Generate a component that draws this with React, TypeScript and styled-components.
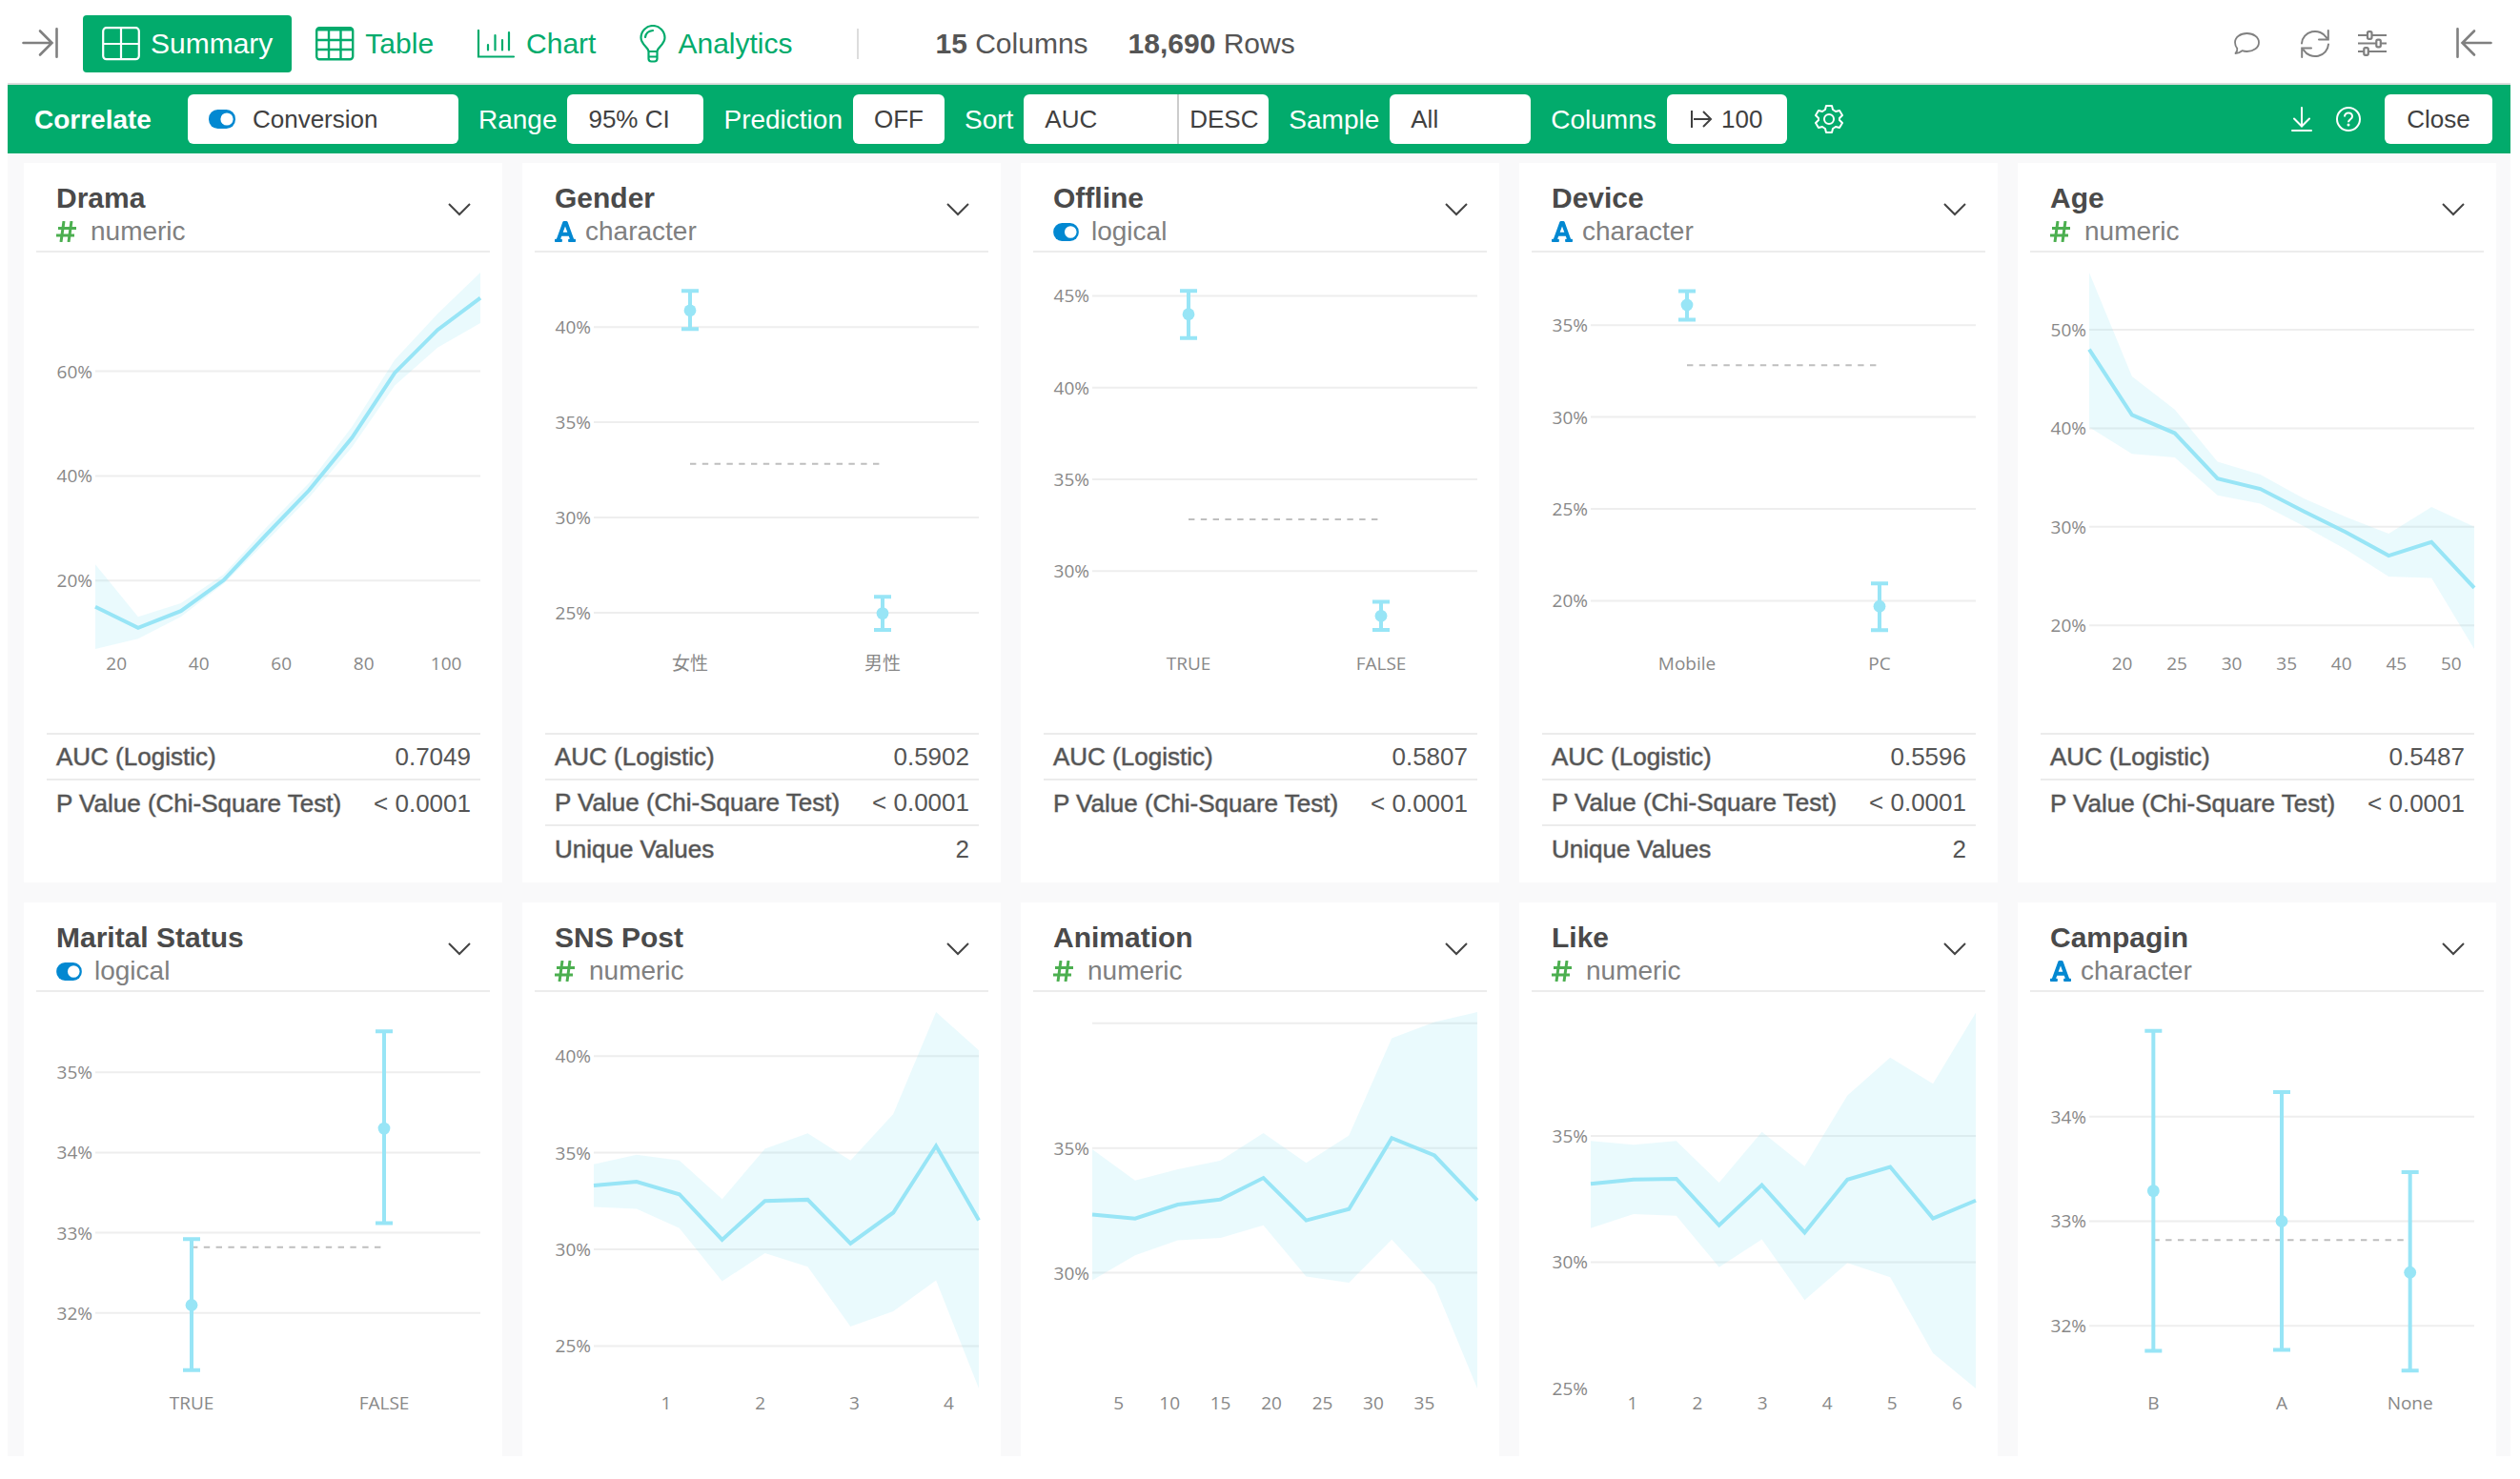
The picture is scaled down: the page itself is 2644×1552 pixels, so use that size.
import React, { useState } from "react";
import styled, { createGlobalStyle } from "styled-components";
import { FaFont } from "react-icons/fa";

const GREEN = "#02ab6c";
const BLUE = "#0288d1";
const SKY = "#98e5f6";

const GlobalStyle = createGlobalStyle`
  *, *::before, *::after { box-sizing: border-box; }
  body {
    margin: 0;
    background: #fff;
    color: #4a4a4a;
    font-family: "Liberation Sans", Arial, "Noto Sans CJK JP", sans-serif;
  }
  button, select { font: inherit; color: inherit; }
`;

const Page = styled.div`
  display: flex;
  flex-direction: column;
  height: 100vh;
  padding: 0 10px 24px 8px;
`;

const TopBar = styled.header`
  display: flex;
  align-items: center;
  justify-content: space-between;
  flex: none;
  padding: 16px 19px 11px 15px;
  border-bottom: 2px solid #ddd;
`;

const TopGroup = styled.div<{ $gap: number }>`
  display: flex;
  align-items: center;
  gap: ${(p) => p.$gap}px;
`;

const IconButton = styled.button<{ $color?: string }>`
  display: flex;
  align-items: center;
  padding: 0;
  border: 0;
  background: none;
  color: ${(p) => p.$color ?? "#808080"};
  cursor: pointer;
`;

const Tabs = styled.nav`
  display: flex;
  align-items: center;
  gap: 5px;
  margin-left: 26px;
`;

const Tab = styled.button<{ $active?: boolean }>`
  display: flex;
  align-items: center;
  gap: 11px;
  height: 60px;
  padding: 0 20px;
  border: 0;
  border-radius: 4px;
  background: ${(p) => (p.$active ? GREEN : "transparent")};
  color: ${(p) => (p.$active ? "#fff" : GREEN)};
  font-size: 30px;
  cursor: pointer;
`;

const Divider = styled.span`
  width: 2px;
  height: 32px;
  margin: 0 80px 0 48px;
  background: #ddd;
`;

const Counts = styled.div`
  display: flex;
  gap: 42px;
  font-size: 30px;
  color: #555;
`;

const GreenBar = styled.section`
  display: flex;
  align-items: center;
  flex: none;
  gap: 21px;
  height: 72px;
  padding: 0 19px 0 28px;
  background: ${GREEN};
  color: #fff;
  font-size: 28px;
`;

const BarTitle = styled.h1`
  margin: 0 17px 0 0;
  padding-top: 2px;
  font-size: 28px;
  font-weight: 700;
`;

const Label = styled.label`
  padding-top: 2px;
`;

const Field = styled.div`
  display: flex;
  align-items: center;
  gap: 11px;
`;

const Box = styled.div<{ $w: number }>`
  display: flex;
  align-items: center;
  width: ${(p) => p.$w}px;
  height: 52px;
  overflow: hidden;
  border-radius: 6px;
  background: #fff;
  color: #404040;
  font-size: 26px;
`;

const Select = styled.select<{ $pad?: number }>`
  flex: 1;
  min-width: 0;
  height: 100%;
  padding: 0 0 0 ${(p) => p.$pad ?? 22}px;
  border: 0;
  appearance: none;
  background: transparent;
`;

const BoxButton = styled.button`
  display: flex;
  flex: 1;
  align-items: center;
  justify-content: center;
  gap: 8px;
  height: 100%;
  padding: 0;
  border: 0;
  background: transparent;
  cursor: pointer;
`;

const OrderButton = styled(BoxButton)`
  flex: 0 0 96px;
  border-left: 2px solid #ccc;
`;

const BoxIcon = styled.span`
  display: flex;
  margin-left: 22px;
`;

const GearButton = styled(IconButton)`
  margin-left: 8px;
`;

const BarEnd = styled.div`
  display: flex;
  align-items: center;
  gap: 25px;
  margin-left: auto;
`;

const Board = styled.main`
  flex: 1;
  min-height: 0;
  overflow-y: auto;
  scrollbar-width: none;
  padding: 10px 15px 0 17px;
  background: #f9f9fa;
`;

const Grid = styled.div`
  display: grid;
  grid-template-columns: repeat(5, minmax(0, 1fr));
  gap: 21px;
`;

const CardBox = styled.article`
  padding-bottom: 12px;
  background: #fff;
`;

const CardHead = styled.header`
  display: flex;
  align-items: flex-start;
  justify-content: space-between;
  margin: 0 13px;
  padding: 20px 20px 2px 21px;
  border-bottom: 2px solid #ececec;
`;

const CardTitle = styled.h2`
  margin: 0;
  font-size: 30px;
  line-height: 34px;
  font-weight: 700;
  color: #4a4a4a;
`;

const MenuButton = styled(IconButton)`
  margin-top: 22px;
`;

const TypeRow = styled.div<{ $gap: number }>`
  display: flex;
  align-items: center;
  gap: ${(p) => p.$gap}px;
  font-size: 28px;
  line-height: 36px;
  color: #808080;
`;

const LetterIcon = styled(FaFont)`
  width: 22px;
  height: 26px;
  color: ${BLUE};
`;

const ChartSvg = styled.svg`
  display: block;
  width: 100%;
  height: auto;
  text {
    font-family: "Open Sans", "Noto Sans CJK JP", sans-serif;
    font-size: 19px;
    fill: #888;
  }
`;

const Stats = styled.table`
  width: calc(100% - 47px);
  margin-left: 24px;
  border-collapse: collapse;
  font-size: 26px;
  color: #555;

  th, td {
    height: 48px;
    padding: 1px 10px 0;
    border-top: 2px solid #ececec;
    font-weight: 400;
    white-space: nowrap;
  }
  th {
    text-align: left;
    -webkit-text-stroke: 1px rgba(85, 85, 85, 0.5);
  }
  td { text-align: right; }
`;

const ToggleIcon = ({ w = 27 }: { w?: number }) => (
  <svg width={w} height={Math.round(w * 0.7)} viewBox="0 0 28 20" aria-hidden="true">
    <rect width="28" height="20" rx="9.5" fill={BLUE} />
    <circle cx="19" cy="10" r="6.6" fill="#fff" />
  </svg>
);

const HashIcon = () => (
  <svg width="21" height="22" viewBox="0 0 21 22" fill="none" stroke="#4caf50" strokeWidth="3" aria-hidden="true">
    <path d="M8 0L5 22M16 0l-3 22M2 7.500h19M0 15h19" />
  </svg>
);

const CollapseIcon = ({ flip }: { flip?: boolean }) => (
  <svg width="38" height="34" viewBox="0 0 38 34" fill="none" stroke="currentColor" strokeWidth="2.6" strokeLinecap="round" aria-hidden="true">
    {flip ? (
      <path d="M1.500 1.300v29.500M36.500 16H7M19 3.500L6.500 16 19 28.500" />
    ) : (
      <path d="M36.500 1.300v29.500M1.500 16H31M19 3.500L31.500 16 19 28.500" />
    )}
  </svg>
);

const SummaryIcon = () => (
  <svg width="40" height="36" viewBox="0 0 40 36" fill="none" stroke="currentColor" strokeWidth="2.2" aria-hidden="true">
    <rect x="1.200" y="1.200" width="37.600" height="33" rx="3.500" />
    <path d="M20 1v33M1 18h38" />
  </svg>
);

const TableIcon = () => (
  <svg width="41" height="36" viewBox="0 0 41 36" fill="none" stroke="currentColor" strokeWidth="2.4" aria-hidden="true">
    <rect x="1.200" y="1.200" width="38" height="33" rx="3" />
    <path d="M14 3v31M26.500 3v31M1 14h38M1 24h38" />
    <path d="M2 3h36.500" strokeWidth="3" />
  </svg>
);

const ChartIcon = () => (
  <svg width="41" height="30" viewBox="0 0 41 30" fill="none" stroke="currentColor" strokeWidth="2.2" strokeLinecap="round" aria-hidden="true">
    <path d="M2 1v27.500h37M12 16v5.500M19.500 6v15.500M27 11v10.500M34 3v18.500" />
  </svg>
);

const BulbIcon = () => (
  <svg width="30" height="40" viewBox="-1 0 30 40" fill="none" stroke="currentColor" strokeWidth="2.2" strokeLinecap="round" strokeLinejoin="round" aria-hidden="true">
    <path d="M9.500 28c0-4.500-8-7-8-14.500a12.500 12.500 0 0 1 25 0C26.500 21 18.500 23.500 18.500 28zM9.500 28v7.500a3 3 0 0 0 3 3h3a3 3 0 0 0 3-3V28M9.500 33.500h9M6 13c.5-4 3.500-6.500 8-7" />
  </svg>
);

const CommentIcon = () => (
  <svg width="27" height="24" viewBox="0 0 27 24" fill="none" stroke="currentColor" strokeWidth="1.8" strokeLinejoin="round" aria-hidden="true">
    <path d="M13.500 1C20.500 1 26 5 26 10.500S20.500 20 13.500 20c-2 0-3.500-.3-5-.8-2 1.600-4.500 2.700-7 2.800 1.300-1.300 2-3 1.800-5.200C1.800 15 1 12.800 1 10.500 1 5 6.500 1 13.500 1z" />
  </svg>
);

const RefreshIcon = () => (
  <svg width="30" height="30" viewBox="0 0 30 30" fill="none" stroke="currentColor" strokeWidth="2" strokeLinecap="round" aria-hidden="true">
    <path d="M1 14.500a14 13.500 0 0 1 26-6M28.800 1v9.500H19M29 15.500a14 13.500 0 0 1-26 6M1.200 29v-9.500H11" />
  </svg>
);

const SlidersIcon = () => (
  <svg width="30" height="28" viewBox="0 0 30 28" fill="none" stroke="currentColor" strokeWidth="2.2" aria-hidden="true">
    <path d="M0 5h10M15 5h15M0 13.500h19M24 13.500h6M0 22h6M11 22h19" />
    <rect x="10" y="1.200" width="4.500" height="7.600" rx="1.500" />
    <rect x="19.300" y="9.700" width="4.500" height="7.600" rx="1.500" />
    <rect x="6.300" y="18.200" width="4.500" height="7.600" rx="1.500" />
  </svg>
);

const GearIcon = () => (
  <svg width="30" height="30" viewBox="0 0 30 30" fill="none" stroke="currentColor" strokeWidth="2" strokeLinejoin="round" aria-hidden="true">
    <path d="M12 1h6l1 4 3 2 4-1 3 5-3 3v2l3 3-3 5-4-1-3 2-1 4h-6l-1-4-3-2-4 1-3-5 3-3v-2l-3-3 3-5 4 1 3-2z" />
    <circle cx="15" cy="15" r="5" />
  </svg>
);

const DownloadIcon = () => (
  <svg width="22" height="26" viewBox="0 0 22 26" fill="none" stroke="currentColor" strokeWidth="2" strokeLinecap="round" aria-hidden="true">
    <path d="M11 1v19M3 12.500l8 8 8-8M1 25h20" />
  </svg>
);

const HelpIcon = () => (
  <svg width="26" height="26" viewBox="0 0 26 26" fill="none" stroke="currentColor" strokeWidth="2" aria-hidden="true">
    <circle cx="13" cy="13" r="12" />
    <path d="M9 10.500c0-2.600 1.800-4 4-4s4 1.400 4 3.700c0 3-4 3-4 6" />
    <circle cx="13" cy="19" r="1.500" fill="currentColor" stroke="none" />
  </svg>
);

const LimitIcon = () => (
  <svg width="24" height="20" viewBox="0 0 24 20" fill="none" stroke="currentColor" strokeWidth="2" aria-hidden="true">
    <path d="M1 1v18M3 10h18M13 2l8 8-8 8" />
  </svg>
);

const ChevronIcon = () => (
  <svg width="24" height="14" viewBox="0 0 24 14" fill="none" stroke="#444" strokeWidth="2" aria-hidden="true">
    <path d="M1 1l11 11L23 1" />
  </svg>
);

type Kind = "numeric" | "character" | "logical";

interface Base {
  name: string;
  kind: Kind;
  range: [number, number];
  ticks: number[];
  unlabelled?: number[];
  unlined?: number[];
  stats?: [string, string][];
}
interface Line extends Base {
  xRange: [number, number];
  xTicks: number[];
  mid: number[];
  high: number[];
  low: number[];
}
interface Cats extends Base {
  cats: { label: string; v: [number, number, number] }[];
}
type Column = Line | Cats;

const MEAN = 32.82;
const stats = (auc: string, unique?: string): [string, string][] => {
  const rows: [string, string][] = [
    ["AUC (Logistic)", auc],
    ["P Value (Chi-Square Test)", "< 0.0001"],
  ];
  return unique ? [...rows, ["Unique Values", unique]] : rows;
};

const columns: Column[] = [
  {
    name: "Drama", kind: "numeric", range: [6.95, 78.85], ticks: [20, 40, 60],
    xRange: [14.86, 108.3], xTicks: [20, 40, 60, 80, 100],
    mid: [15, 11, 14.2, 20.1, 28.8, 37.3, 47.3, 59.7, 67.9, 74],
    high: [23.1, 13.1, 15.7, 21.2, 30.2, 38.7, 49.4, 62.2, 71, 78.85],
    low: [6.95, 8.9, 13.1, 19.4, 27.5, 35.9, 45.5, 57.3, 64.5, 69.2],
    stats: stats("0.7049"),
  },
  {
    name: "Gender", kind: "character", range: [23.1, 42.86], ticks: [25, 30, 35, 40],
    cats: [{ label: "女性", v: [39.9, 40.87, 41.9] }, { label: "男性", v: [24.1, 24.97, 25.84] }],
    stats: stats("0.5902", "2"),
  },
  {
    name: "Offline", kind: "logical", range: [25.76, 46.27], ticks: [30, 35, 40, 45],
    cats: [{ label: "TRUE", v: [42.7, 44, 45.27] }, { label: "FALSE", v: [26.8, 27.56, 28.33] }],
    stats: stats("0.5807"),
  },
  {
    name: "Device", kind: "character", range: [17.38, 37.86], ticks: [20, 25, 30, 35],
    cats: [{ label: "Mobile", v: [35.3, 36.1, 36.85] }, { label: "PC", v: [18.4, 19.7, 20.95] }],
    stats: stats("0.5596", "2"),
  },
  {
    name: "Age", kind: "numeric", range: [17.6, 55.8], ticks: [20, 30, 40, 50],
    xRange: [17, 52.1], xTicks: [20, 25, 30, 35, 40, 45, 50],
    mid: [48, 41.35, 39.5, 34.9, 33.84, 31.6, 29.44, 27.07, 28.45, 23.8],
    high: [55.8, 45.26, 41.9, 36.6, 35.3, 32.9, 31, 29.3, 32, 30],
    low: [40.1, 37.4, 37.05, 33.2, 32.36, 30.1, 27.7, 24.94, 24.8, 17.6],
    stats: stats("0.5487"),
  },
  {
    name: "Marital Status", kind: "logical", range: [31.06, 35.75], ticks: [32, 33, 34, 35],
    cats: [{ label: "TRUE", v: [31.29, 32.1, 32.92] }, { label: "FALSE", v: [33.12, 34.3, 35.51] }],
  },
  {
    name: "SNS Post", kind: "numeric", range: [22.8, 42.28], ticks: [25, 30, 35, 40],
    xRange: [0.233, 4.32], xTicks: [1, 2, 3, 4],
    mid: [33.3, 33.5, 32.85, 30.5, 32.5, 32.57, 30.3, 31.9, 35.35, 31.5],
    high: [34.4, 34.9, 34.6, 32.6, 35.2, 36, 34.6, 37, 42.28, 40.3],
    low: [32.2, 32.1, 31.1, 28.35, 29.8, 29.1, 26, 26.8, 28.4, 22.8],
  },
  {
    name: "Animation", kind: "numeric", range: [25.36, 40.45], ticks: [30, 35, 40], unlabelled: [40],
    xRange: [2.41, 40.2], xTicks: [5, 10, 15, 20, 25, 30, 35],
    mid: [32.33, 32.17, 32.73, 32.94, 33.8, 32.1, 32.55, 35.4, 34.7, 32.9],
    high: [34.95, 33.7, 34.15, 34.5, 35.6, 34.4, 35.5, 39.4, 40.05, 40.45],
    low: [29.7, 30.7, 31.3, 31.4, 31.9, 29.85, 29.6, 31.33, 29.5, 25.36],
  },
  {
    name: "Like", kind: "numeric", range: [25, 39.9], ticks: [25, 30, 35], unlined: [25],
    xRange: [0.355, 6.288], xTicks: [1, 2, 3, 4, 5, 6],
    mid: [33.1, 33.27, 33.3, 31.46, 33.05, 31.17, 33.27, 33.77, 31.73, 32.44],
    high: [34.8, 34.65, 34.8, 33.15, 35.16, 33.8, 36.6, 38.1, 37.06, 39.87],
    low: [31.35, 31.9, 31.84, 29.8, 30.9, 28.5, 29.97, 29.4, 26.4, 25],
  },
  {
    name: "Campagin", kind: "character", range: [31.4, 35], ticks: [32, 33, 34],
    cats: [
      { label: "B", v: [31.76, 33.29, 34.82] },
      { label: "A", v: [31.77, 33, 34.235] },
      { label: "None", v: [31.57, 32.51, 33.47] },
    ],
  },
];

const PLOT = { left: 75, right: 479, top: 21, bottom: 416 };

function ColumnChart({ col }: { col: Column }) {
  const w = PLOT.right - PLOT.left;
  const h = PLOT.bottom - PLOT.top;
  const y = (v: number) => PLOT.bottom - ((v - col.range[0]) / (col.range[1] - col.range[0])) * h;
  const at = (f: number) => PLOT.left + f * w;
  const trace = (vals: number[]) => vals.map((v, i) => [at(i / (vals.length - 1)), y(v)].join(","));

  return (
    <ChartSvg viewBox="0 0 502 504" role="img" aria-label={`${col.name} chart`}>
      {col.ticks.map((t) => (
        <g key={t}>
          {!col.unlined?.includes(t) && (
            <line x1={PLOT.left} x2={PLOT.right} y1={y(t)} y2={y(t)} stroke="#eee" strokeWidth="2" />
          )}
          {!col.unlabelled?.includes(t) && (
            <text x={PLOT.left - 3} y={y(t) + 7} textAnchor="end">{t}%</text>
          )}
        </g>
      ))}
      {"mid" in col ? (
        <>
          <polygon points={[...trace(col.high), ...trace(col.low).reverse()].join(" ")} fill={SKY} fillOpacity="0.2" />
          <polyline points={trace(col.mid).join(" ")} fill="none" stroke={SKY} strokeWidth="4" />
          {col.xTicks.map((t) => (
            <text key={t} x={at((t - col.xRange[0]) / (col.xRange[1] - col.xRange[0]))} y="438" textAnchor="middle">{t}</text>
          ))}
        </>
      ) : (
        <>
          <line
            x1={at(0.5 / col.cats.length)} x2={at(1 - 0.5 / col.cats.length)}
            y1={y(MEAN)} y2={y(MEAN)} stroke="#bfbfbf" strokeWidth="2" strokeDasharray="6.4 6.4"
          />
          {col.cats.map(({ label, v }, i) => {
            const x = at((i + 0.5) / col.cats.length);
            return (
              <g key={label}>
                <path
                  d={`M${x} ${y(v[0])}V${y(v[2])}M${x - 9} ${y(v[0])}h18M${x - 9} ${y(v[2])}h18`}
                  stroke={SKY} strokeWidth="4"
                />
                <circle cx={x} cy={y(v[1])} r="6.4" fill={SKY} />
                <text x={x} y="438" textAnchor="middle">{label}</text>
              </g>
            );
          })}
        </>
      )}
    </ChartSvg>
  );
}

const typeGap: Record<Kind, number> = { numeric: 15, character: 10, logical: 13 };

function TypeIcon({ kind }: { kind: Kind }) {
  if (kind === "numeric") return <HashIcon />;
  if (kind === "character") return <LetterIcon />;
  return <ToggleIcon />;
}

function Card({ col }: { col: Column }) {
  return (
    <CardBox>
      <CardHead>
        <div>
          <CardTitle>{col.name}</CardTitle>
          <TypeRow $gap={typeGap[col.kind]}>
            <TypeIcon kind={col.kind} />
            {col.kind}
          </TypeRow>
        </div>
        <MenuButton aria-label={`${col.name} menu`}><ChevronIcon /></MenuButton>
      </CardHead>
      <ColumnChart col={col} />
      {col.stats && (
        <Stats>
          <tbody>
            {col.stats.map(([k, v]) => (
              <tr key={k}>
                <th scope="row">{k}</th>
                <td>{v}</td>
              </tr>
            ))}
          </tbody>
        </Stats>
      )}
    </CardBox>
  );
}

const tabs = [
  { name: "Summary", Icon: SummaryIcon },
  { name: "Table", Icon: TableIcon },
  { name: "Chart", Icon: ChartIcon },
  { name: "Analytics", Icon: BulbIcon },
];

export default function App() {
  const [tab, setTab] = useState("Summary");
  const [prediction, setPrediction] = useState(false);
  const [desc, setDesc] = useState(true);

  return (
    <>
      <GlobalStyle />
      <Page>
        <TopBar>
          <TopGroup $gap={0}>
            <IconButton aria-label="Expand left panel"><CollapseIcon /></IconButton>
            <Tabs>
              {tabs.map(({ name, Icon }) => (
                <Tab key={name} $active={tab === name} onClick={() => setTab(name)}>
                  <Icon />
                  {name}
                </Tab>
              ))}
            </Tabs>
            <Divider />
            <Counts>
              <span><b>15</b> Columns</span>
              <span><b>18,690</b> Rows</span>
            </Counts>
          </TopGroup>
          <TopGroup $gap={73}>
            <TopGroup $gap={30}>
              <TopGroup $gap={43}>
                <IconButton aria-label="Comments"><CommentIcon /></IconButton>
                <IconButton aria-label="Refresh"><RefreshIcon /></IconButton>
              </TopGroup>
              <IconButton aria-label="Settings"><SlidersIcon /></IconButton>
            </TopGroup>
            <IconButton aria-label="Expand right panel"><CollapseIcon flip /></IconButton>
          </TopGroup>
        </TopBar>

        <GreenBar>
          <BarTitle>Correlate</BarTitle>
          <Box $w={284}>
            <BoxIcon><ToggleIcon w={28} /></BoxIcon>
            <Select $pad={18} aria-label="Target column"><option>Conversion</option></Select>
          </Box>
          <Field>
            <Label htmlFor="range">Range</Label>
            <Box $w={143}><Select id="range"><option>95% CI</option></Select></Box>
          </Field>
          <Field>
            <Label htmlFor="prediction">Prediction</Label>
            <Box $w={96}>
              <BoxButton id="prediction" onClick={() => setPrediction(!prediction)}>
                {prediction ? "ON" : "OFF"}
              </BoxButton>
            </Box>
          </Field>
          <Field>
            <Label htmlFor="sort">Sort</Label>
            <Box $w={257}>
              <Select id="sort"><option>AUC</option></Select>
              <OrderButton onClick={() => setDesc(!desc)}>{desc ? "DESC" : "ASC"}</OrderButton>
            </Box>
          </Field>
          <Field>
            <Label htmlFor="sample">Sample</Label>
            <Box $w={148}><Select id="sample"><option>All</option></Select></Box>
          </Field>
          <Field>
            <Label htmlFor="columns">Columns</Label>
            <Box $w={126}>
              <BoxButton id="columns"><LimitIcon />100</BoxButton>
            </Box>
          </Field>
          <GearButton $color="#fff" aria-label="Chart settings"><GearIcon /></GearButton>
          <BarEnd>
            <IconButton $color="#fff" aria-label="Download"><DownloadIcon /></IconButton>
            <IconButton $color="#fff" aria-label="Help"><HelpIcon /></IconButton>
            <Box $w={113}><BoxButton>Close</BoxButton></Box>
          </BarEnd>
        </GreenBar>

        <Board>
          <Grid>
            {columns.map((col) => <Card key={col.name} col={col} />)}
          </Grid>
        </Board>
      </Page>
    </>
  );
}
